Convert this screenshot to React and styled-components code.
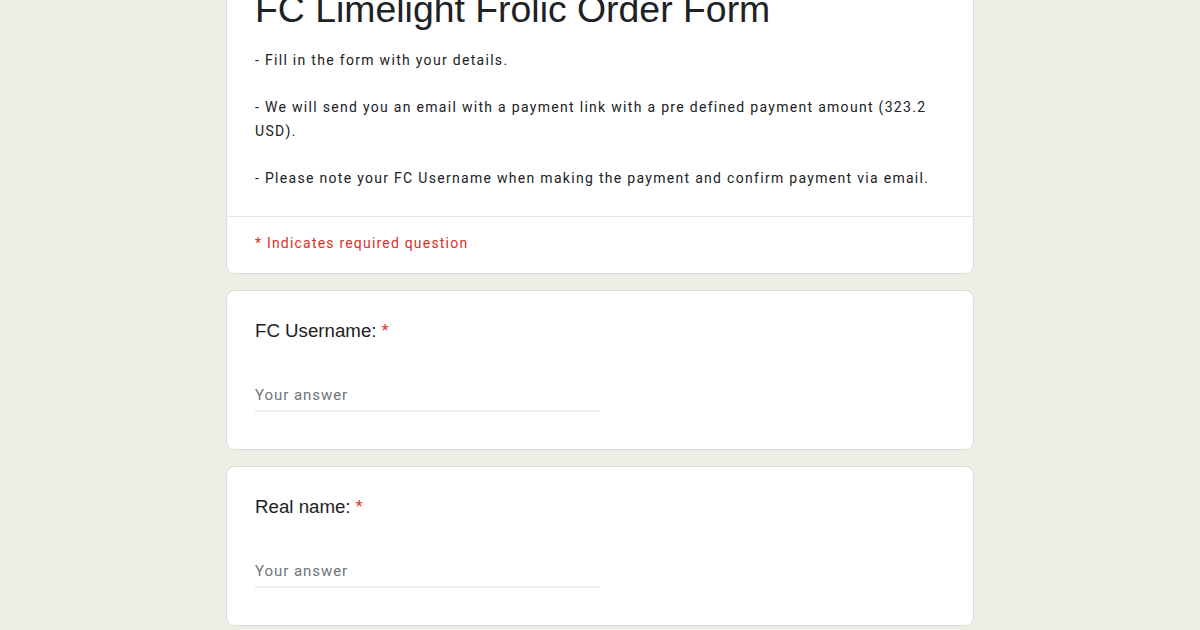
import React from "react";
import styled, { createGlobalStyle } from "styled-components";

const Global = createGlobalStyle`
  body {
    margin: 0;
    background: #efeee4;
  }
`;

const Page = styled.div`
  width: 1200px;
  height: 630px;
  overflow: hidden;
  display: flex;
  justify-content: center;
`;

const Column = styled.div`
  width: 748px;
  margin-top: -34px;
  display: flex;
  flex-direction: column;
  gap: 16px;
`;

const Card = styled.div`
  background: #fff;
  border: 1px solid #dadce0;
  border-radius: 8px;
`;

const Header = styled.div`
  padding: 20px 24px 26px 28px;
  border-bottom: 1px solid #e6e6e6;
`;

const Title = styled.h1`
  margin: 0 0 18px;
  font-family: "Liberation Sans", Arial, sans-serif;
  font-weight: 400;
  font-size: 37.4px;
  line-height: 44px;
  color: #202124;
`;

const Desc = styled.p`
  margin: 0;
  font-family: Roboto, "Liberation Sans", sans-serif;
  font-size: 14px;
  line-height: 23.5px;
  letter-spacing: 1.3px;
  color: #202124;
  white-space: pre-wrap;
`;

const Required = styled.div`
  padding: 18px 28px 22px;
  font-family: Roboto, "Liberation Sans", sans-serif;
  font-size: 14px;
  letter-spacing: 1.2px;
  color: #d93025;
`;

const Question = styled(Card)`
  padding: 28px 28px 37px;
`;

const Label = styled.div`
  font-family: "Liberation Sans", Arial, sans-serif;
  font-size: 18.7px;
  line-height: 24px;
  color: #202124;
`;

const Star = styled.span`
  color: #d93025;
  margin-left: 5px;
`;

const Answer = styled.div`
  margin-top: 42px;
  width: 345px;
  padding-bottom: 5px;
  border-bottom: 2px solid #ececec;
  font-family: Roboto, "Liberation Sans", sans-serif;
  font-size: 15px;
  line-height: 20px;
  letter-spacing: 0.95px;
  color: #70757a;
`;

const questions = ["FC Username:", "Real name:"];

export default function App() {
  return (
    <Page>
      <Global />
      <Column>
        <Card>
          <Header>
            <Title>FC Limelight Frolic Order Form</Title>
            <Desc>
              {"- Fill in the form with your details.\n\n- We will send you an email with a payment link with a pre defined payment amount (323.2 USD).\n\n- Please note your FC Username when making the payment and confirm payment via email."}
            </Desc>
          </Header>
          <Required>* Indicates required question</Required>
        </Card>
        {questions.map((q) => (
          <Question key={q}>
            <Label>
              {q}
              <Star>*</Star>
            </Label>
            <Answer>Your answer</Answer>
          </Question>
        ))}
      </Column>
    </Page>
  );
}
